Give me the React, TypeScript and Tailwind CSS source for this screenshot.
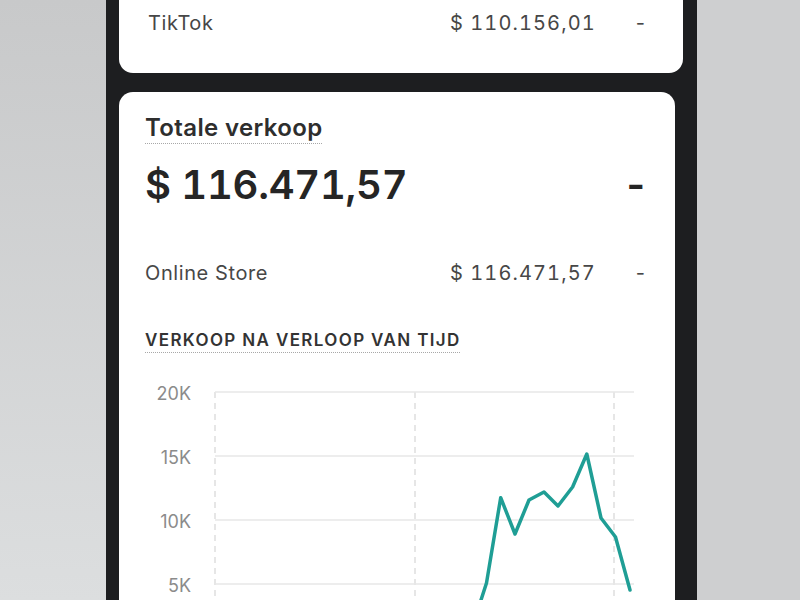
import React from 'react'

const font = { fontFamily: 'Inter, "Noto Sans", sans-serif' }

const points = [
  [359, 242],
  [362, 230],
  [367.5, 213],
  [381.7, 127.7],
  [396, 164],
  [410, 130],
  [425, 122],
  [439, 136],
  [453.6, 117],
  [467.8, 84],
  [482, 148],
  [496.5, 167],
  [511, 220],
]

const gridY = [
  { y: 22, label: '20K' },
  { y: 86, label: '15K' },
  { y: 150, label: '10K' },
  { y: 214, label: '5K' },
]

const SalesChart = () => (
  <svg width="556" height="240" viewBox="0 0 556 240" className="block">
    {[96, 296, 495].map((x) => (
      <line key={x} x1={x} y1={22} x2={x} y2={240} stroke="#dedede" strokeWidth="1.5" strokeDasharray="6 5" />
    ))}
    {gridY.map((g) => (
      <g key={g.label}>
        <line x1={96} y1={g.y} x2={515} y2={g.y} stroke="#e7e7e7" strokeWidth="1.5" />
        <text x={72} y={g.y + 7.5} textAnchor="end" fontSize="18" fill="#8b8b8b" style={font}>
          {g.label}
        </text>
      </g>
    ))}
    <polyline
      points={points.map((p) => p.join(',')).join(' ')}
      fill="none"
      stroke="#1f9e95"
      strokeWidth="3.5"
      strokeLinejoin="round"
      strokeLinecap="round"
    />
  </svg>
)

const ChannelRow = ({ name, amount }: { name: string; amount: string }) => (
  <div className="flex items-center text-[20px] leading-[28px] text-[#474747]">
    <span className="tracking-[0.03em]">{name}</span>
    <span className="ml-auto tracking-[0.055em] tabular-nums">{amount}</span>
    <span className="ml-[40px]">-</span>
  </div>
)

export default function App() {
  return (
    <div className="flex h-[600px] w-[800px] overflow-hidden" style={font}>
      <div className="w-[106px] bg-gradient-to-b from-[#c8c9ca] to-[#dcdedf]" />
      <div className="flex w-[591px] flex-col bg-[#1d1e20] pl-[13px]">
        <div className="h-[73px] w-[564px] shrink-0 rounded-b-[14px] bg-white pt-[9px] pl-[29px] pr-[38px]">
          <ChannelRow name="TikTok" amount="$ 110.156,01" />
        </div>
        <div className="mt-[19px] flex w-[556px] flex-1 flex-col rounded-t-[14px] bg-white">
          <div className="pt-[21px] pl-[26px] pr-[30px]">
            <div className="text-[24px] font-semibold leading-[30px] tracking-[0.015em] text-[#2e2e2e]">
              <span className="underline decoration-dotted decoration-[#a8a8a8] decoration-1 underline-offset-[7px]">
                Totale verkoop
              </span>
            </div>
            <div className="mt-[18px] flex items-baseline text-[40px] font-semibold leading-[48px] text-[#252525]">
              <span className="tracking-[-0.006em] tabular-nums">$ 116.471,57</span>
              <span className="ml-auto">-</span>
            </div>
            <div className="mt-[50px]">
              <ChannelRow name="Online Store" amount="$ 116.471,57" />
            </div>
            <div className="mt-[42px] text-[17px] font-semibold uppercase leading-[22px] tracking-[0.08em] text-[#333333]">
              <span className="underline decoration-dotted decoration-[#a8a8a8] decoration-1 underline-offset-[6px]">
                Verkoop na verloop van tijd
              </span>
            </div>
          </div>
          <div className="mt-[19px]">
            <SalesChart />
          </div>
        </div>
      </div>
      <div className="flex-1 bg-[#cecfd0]" />
    </div>
  )
}
